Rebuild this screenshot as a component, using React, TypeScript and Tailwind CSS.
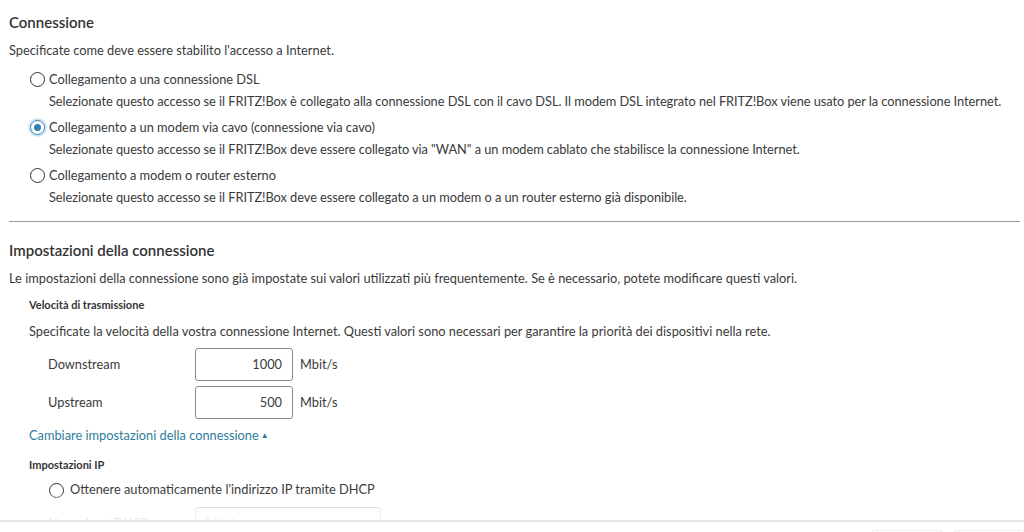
import { useState } from 'react';

const FONT = { fontFamily: 'Lato, "Noto Sans", sans-serif' };

const options = [
  {
    id: 'dsl',
    label: 'Collegamento a una connessione DSL',
    text: 'Selezionate questo accesso se il FRITZ!Box è collegato alla connessione DSL con il cavo DSL. Il modem DSL integrato nel FRITZ!Box viene usato per la connessione Internet.',
  },
  {
    id: 'cable',
    label: 'Collegamento a un modem via cavo (connessione via cavo)',
    text: 'Selezionate questo accesso se il FRITZ!Box deve essere collegato via "WAN" a un modem cablato che stabilisce la connessione Internet.',
  },
  {
    id: 'external',
    label: 'Collegamento a modem o router esterno',
    text: 'Selezionate questo accesso se il FRITZ!Box deve essere collegato a un modem o a un router esterno già disponibile.',
  },
];

const Radio = ({ checked }: { checked: boolean }) => (
  <span
    className={`flex h-[15px] w-[15px] shrink-0 items-center justify-center rounded-full border-[1.5px] ${
      checked ? 'border-[#2f7fb8] shadow-[0_0_0_2px_#d3e6f4]' : 'border-[#333]'
    }`}
  >
    {checked && <span className="h-[7px] w-[7px] rounded-full bg-[#2f7fb8]" />}
  </span>
);

const SpeedRow = ({ label, value }: { label: string; value: string }) => (
  <div className="flex items-center">
    <span className="w-[166px] pl-[19px]">{label}</span>
    <div className="flex h-[33px] w-[98px] items-center justify-end rounded-[3px] border border-[#8a8a8a] pr-[10px]">
      {value}
    </div>
    <span className="ml-[7px]">Mbit/s</span>
  </div>
);

export default function App() {
  const [conn, setConn] = useState('cable');

  return (
    <div className="relative h-[532px] w-[1024px] overflow-hidden bg-white text-[12.8px] text-[#3a3a3a]" style={FONT}>
      <div className="pl-[9px] pr-[4px] pt-[13px]">
        {/* Connessione */}
        <h2 className="text-[15px] font-semibold leading-[19px] text-[#333]">Connessione</h2>
        <p className="mt-[9px] leading-[18px]">Specificate come deve essere stabilito l'accesso a Internet.</p>

        <div className="mt-[11px] flex flex-col gap-[8px] pl-[21px]">
          {options.map((o) => (
            <div key={o.id} onClick={() => setConn(o.id)} className="cursor-pointer">
              <div className="flex h-[18px] items-center gap-[4px]">
                <Radio checked={conn === o.id} />
                <span className="leading-[18px]">{o.label}</span>
              </div>
              <p className="mt-[4px] whitespace-nowrap pl-[19px] leading-[18px] tracking-[-0.05px]">{o.text}</p>
            </div>
          ))}
        </div>

        <hr className="mt-[15px] border-t border-[#9a9a9a]" />

        {/* Impostazioni della connessione */}
        <h2 className="mt-[19px] text-[15px] font-semibold leading-[19px] text-[#333]">Impostazioni della connessione</h2>
        <p className="mt-[9px] leading-[18px]">
          Le impostazioni della connessione sono già impostate sui valori utilizzati più frequentemente. Se è necessario, potete modificare questi valori.
        </p>

        <div className="pl-[20px]">
          <h3 className="mt-[11px] text-[11px] font-bold leading-[14px] text-[#333]">Velocità di trasmissione</h3>
          <p className="mt-[10px] leading-[18px]">
            Specificate la velocità della vostra connessione Internet. Questi valori sono necessari per garantire la priorità dei dispositivi nella rete.
          </p>

          <div className="mt-[8px] flex flex-col gap-[5px]">
            <SpeedRow label="Downstream" value="1000" />
            <SpeedRow label="Upstream" value="500" />
          </div>

          <a className="mt-[7px] flex items-center gap-[2px] leading-[18px] text-[#2f7b9c]">
            Cambiare impostazioni della connessione
            <span className="text-[8px]">▲</span>
          </a>

          <h3 className="mt-[14px] text-[11px] font-bold leading-[14px] text-[#333]">Impostazioni IP</h3>

          <div className="mt-[9px] flex h-[18px] items-center gap-[6px] pl-[20px]">
            <Radio checked={false} />
            <span>Ottenere automaticamente l'indirizzo IP tramite DHCP</span>
          </div>

          <div className="mt-[8px] flex items-center">
            <span className="w-[166px] pl-[19px]">Nome host DHCP</span>
            <div className="flex h-[33px] w-[186px] items-center rounded-[3px] border border-[#8a8a8a] px-[9px]">fritz.box</div>
          </div>
        </div>
      </div>

      {/* fade + footer bar */}
      <div className="pointer-events-none absolute bottom-[12px] left-0 right-0 h-[28px] bg-gradient-to-b from-white/0 via-white/70 to-white/90" />
      <div className="absolute bottom-0 left-0 right-0 flex h-[12px] items-end justify-end gap-[12px] border-t-2 border-[#e6e6e6] bg-white">
        <span className="h-[2px] w-[70px] rounded-t-[3px] border border-b-0 border-[#eeeeee]" />
        <span className="h-[2px] w-[70px] rounded-t-[3px] border border-b-0 border-[#eeeeee]" />
      </div>
    </div>
  );
}
